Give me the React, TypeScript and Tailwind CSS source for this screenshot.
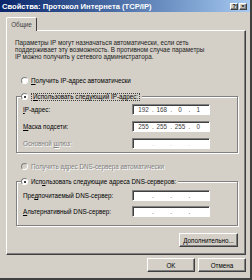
import React from "react";

const raised =
  "border border-t-white border-l-white border-r-[#404040] border-b-[#404040] shadow-[inset_-1px_-1px_0_#808080]";
const sunken =
  "border border-t-[#808080] border-l-[#808080] border-r-white border-b-white shadow-[inset_1px_1px_0_#404040]";
const etched =
  "border border-[#808080] shadow-[inset_1px_1px_0_#fff,1px_1px_0_#fff]";

const Radio = ({ checked, disabled }: { checked?: boolean; disabled?: boolean }) => (
  <span
    className={`flex items-center justify-center w-[7px] h-[7px] rounded-full border border-t-[#808080] border-l-[#808080] border-r-white border-b-white ${
      disabled ? "bg-[#d4d0c8]" : "bg-white"
    }`}
  >
    {checked && <span className="w-[2px] h-[2px] rounded-full bg-black" />}
  </span>
);

const IpField = ({ parts, faint }: { parts?: string[]; faint?: boolean }) => {
  const segs = parts ?? ["", "", "", ""];
  return (
    <div className={`flex items-center w-[78px] h-[11px] bg-white px-[3px] ${sunken}`}>
      {segs.map((s, i) => (
        <React.Fragment key={i}>
          <span className="flex-1 text-center text-[#404040]">{s}</span>
          {i < 3 && (
            <span className={`w-[3px] text-center ${faint ? "text-[#c0c0c0]" : "text-[#404040]"}`}>.</span>
          )}
        </React.Fragment>
      ))}
    </div>
  );
};

const Row = ({ label, children, disabled }: { label: React.ReactNode; children: React.ReactNode; disabled?: boolean }) => (
  <div className="flex items-center">
    <span
      className={`w-[109px] whitespace-nowrap ${
        disabled ? "text-[#808080] [text-shadow:1px_1px_0_#fff]" : ""
      }`}
    >
      {label}
    </span>
    {children}
  </div>
);

const Button = ({ children, className }: { children: React.ReactNode; className?: string }) => (
  <div className={`flex items-center justify-center h-[14px] bg-[#d4d0c8] ${raised} ${className ?? ""}`}>
    {children}
  </div>
);

export default function App() {
  return (
    <div className="w-[252px] h-[280px] overflow-hidden bg-[#d4d0c8] border-r-2 border-b-2 border-r-[#404040] border-b-[#404040] font-['Liberation_Sans',Arial,sans-serif] text-[6.3px] leading-[7px] text-black flex flex-col">
      <div className="flex items-center h-[12px] shrink-0 bg-gradient-to-r from-[#0a246a] to-[#a6caf0] pl-[2px] pr-[3px]">
        <span className="text-white font-bold text-[7.6px] whitespace-nowrap">
          Свойства: Протокол Интернета (TCP/IP)
        </span>
        <div className="ml-auto flex gap-[1px]">
          <div className={`w-[8px] h-[7px] bg-[#d4d0c8] flex items-center justify-center text-[6px] font-bold leading-none ${raised}`}>
            ?
          </div>
          <div className={`w-[8px] h-[7px] bg-[#d4d0c8] flex items-center justify-center text-[6px] font-bold leading-none ${raised}`}>
            ×
          </div>
        </div>
      </div>

      <div className="pl-[6px] pr-[4px] pt-[5px]">
        <div className="relative z-10 -mb-[1px] flex items-center justify-center w-[31px] h-[14px] bg-[#d4d0c8] border-t border-l border-r border-t-white border-l-white border-r-[#404040] rounded-t-[2px] text-[#404040]">
          Общие
        </div>
        <div className={`h-[225px] bg-[#d4d0c8] ${raised} pt-[8px] flex flex-col`}>
          <p className="pl-[8px] whitespace-nowrap text-[#202020]">
            Параметры IP могут назначаться автоматически, если сеть
            <br />
            поддерживает эту возможность. В противном случае параметры
            <br />
            IP можно получить у сетевого администратора.
          </p>

          <div className="flex items-center gap-[3px] pl-[14px] mt-[16px] h-[8px]">
            <Radio />
            <span>
              <u>П</u>олучить IP-адрес автоматически
            </span>
          </div>

          <div className={`ml-[9px] mr-[7px] mt-[12px] pl-[6px] pr-[6px] pb-[3px] ${etched}`}>
            <div className="-mt-[5px] -ml-[2px] flex items-center gap-[3px] w-fit bg-[#d4d0c8] pr-[2px] h-[9px]">
              <Radio checked />
              <span className="border border-dotted border-[#404040] px-[1px] leading-[6px]">
                <u>И</u>спользовать следующий IP-адрес:
              </span>
            </div>
            <div className="flex flex-col gap-[6px] mt-[3px]">
              <Row label={<><u>I</u>P-адрес:</>}>
                <IpField parts={["192", "168", "0", "1"]} />
              </Row>
              <Row label={<><u>М</u>аска подсети:</>}>
                <IpField parts={["255", "255", "255", "0"]} />
              </Row>
              <Row label={<>Основной <u>ш</u>люз:</>} disabled>
                <IpField faint />
              </Row>
            </div>
          </div>

          <div className="flex items-center gap-[3px] pl-[14px] mt-[9px] h-[8px] text-[#808080] [text-shadow:1px_1px_0_#fff]">
            <Radio disabled />
            <span>Получить адрес DNS-сервера автоматически</span>
          </div>

          <div className={`ml-[9px] mr-[7px] mt-[11px] pl-[6px] pr-[6px] pb-[8px] ${etched}`}>
            <div className="-mt-[5px] -ml-[2px] flex items-center gap-[3px] w-fit bg-[#d4d0c8] pr-[2px] h-[9px]">
              <Radio checked />
              <span>
                Исп<u>о</u>льзовать следующие адреса DNS-серверов:
              </span>
            </div>
            <div className="flex flex-col gap-[5px] mt-[4px]">
              <Row label={<>Пре<u>д</u>почитаемый DNS-сервер:</>}>
                <IpField />
              </Row>
              <Row label={<><u>А</u>льтернативный DNS-сервер:</>}>
                <IpField />
              </Row>
            </div>
          </div>

          <div className="flex justify-end mr-[7px] mt-[7px]">
            <Button className="w-[59px]">
              <span>
                <u>Д</u>ополнительно...
              </span>
            </Button>
          </div>
        </div>
      </div>

      <div className="flex justify-end gap-[3px] pr-[4px] mt-[3px]">
        <Button className="w-[48px]">OK</Button>
        <Button className="w-[48px]">Отмена</Button>
      </div>
    </div>
  );
}
